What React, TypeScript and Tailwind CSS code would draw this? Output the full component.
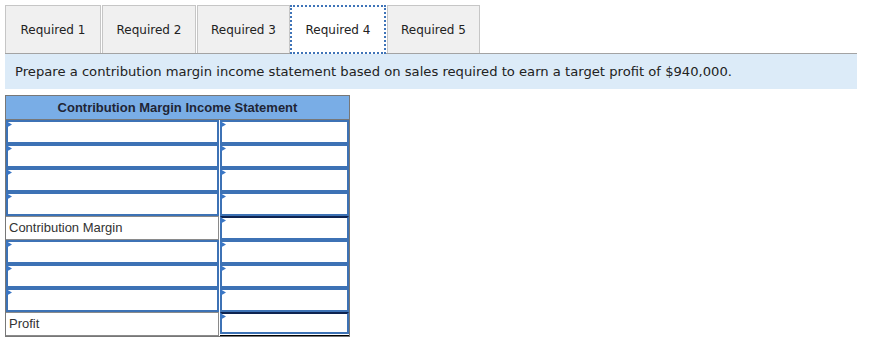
const tabs = [
  { label: "Required 1", w: "w-[96px]" },
  { label: "Required 2", w: "w-[94px]" },
  { label: "Required 3", w: "w-[93px]" },
  { label: "Required 4", w: "w-[96px]", active: true },
  { label: "Required 5", w: "w-[93px]" },
];

type Row = { label?: string; total?: boolean; final?: boolean };

const rows: Row[] = [
  {},
  {},
  {},
  {},
  { label: "Contribution Margin", total: true },
  {},
  {},
  {},
  { label: "Profit", total: true, final: true },
];

// little dropdown marker in the top-left corner of each entry cell
const Marker = () => (
  <svg
    width="6"
    height="7"
    viewBox="0 0 6 7"
    className="absolute -left-[2px] -top-[1px]"
  >
    <polygon points="0,0 6,3.5 0,7" fill="#3a76c4" />
  </svg>
);

const InputCell = ({ className = "", marker = true }: { className?: string; marker?: boolean }) => (
  <div className={`relative h-full border-2 border-[#3d72b5] bg-white ${className}`}>
    {marker && <Marker />}
  </div>
);

export default function App() {
  return (
    <div className="w-[872px] h-[346px] bg-white pt-[5px] pl-[5px] font-['DejaVu_Sans',sans-serif]">
      {/* tab strip */}
      <div className="w-[852px] flex items-end gap-px border-b border-[#a3a3a3]">
        {tabs.map((t) =>
          t.active ? (
            <div
              key={t.label}
              className={`${t.w} -ml-px relative z-10 -mb-px h-[49px] flex items-center justify-center bg-white border-2 border-dotted border-[#3f74b8] text-[12px] text-[#222]`}
            >
              {t.label}
            </div>
          ) : (
            <div
              key={t.label}
              className={`${t.w} h-[48px] flex items-center justify-center bg-[#f0f0f0] border border-b-0 border-[#c6c6c6] text-[12px] text-[#222]`}
            >
              {t.label}
            </div>
          )
        )}
      </div>

      {/* instructions */}
      <div className="w-[852px] h-[35px] bg-[#dcebf8] pl-[10px] flex items-center text-[13.15px] text-[#222]">
        Prepare a contribution margin income statement based on sales required to earn a target profit of $940,000.
      </div>

      {/* statement */}
      <div className="mt-[6px] w-[345px] border border-[#777] font-['Liberation_Sans',Arial,sans-serif]">
        <div className="h-[24px] bg-[#79ade6] border-b border-[#777] flex items-center justify-center text-[13px] font-bold text-[#1f2535]">
          Contribution Margin Income Statement
        </div>
        {rows.map((r, i) => (
          <div key={i} className="h-[24px] flex gap-px">
            {r.label ? (
              <div className="w-[213px] h-full border border-l-0 border-[#8a8a8a] flex items-center pl-[3px] text-[13px] text-[#333]">
                {r.label}
              </div>
            ) : (
              <div className="w-[213px] h-full">
                <InputCell />
              </div>
            )}
            <div className="flex-1 h-full">
              {r.final ? (
                <div className="h-full flex flex-col">
                  <InputCell className="border-t-[#0e2350] flex-1" />
                  <div className="h-px mt-px bg-black" />
                </div>
              ) : (
                <InputCell className={r.total ? "border-t-[#0e2350]" : ""} />
              )}
            </div>
          </div>
        ))}
      </div>
    </div>
  );
}
